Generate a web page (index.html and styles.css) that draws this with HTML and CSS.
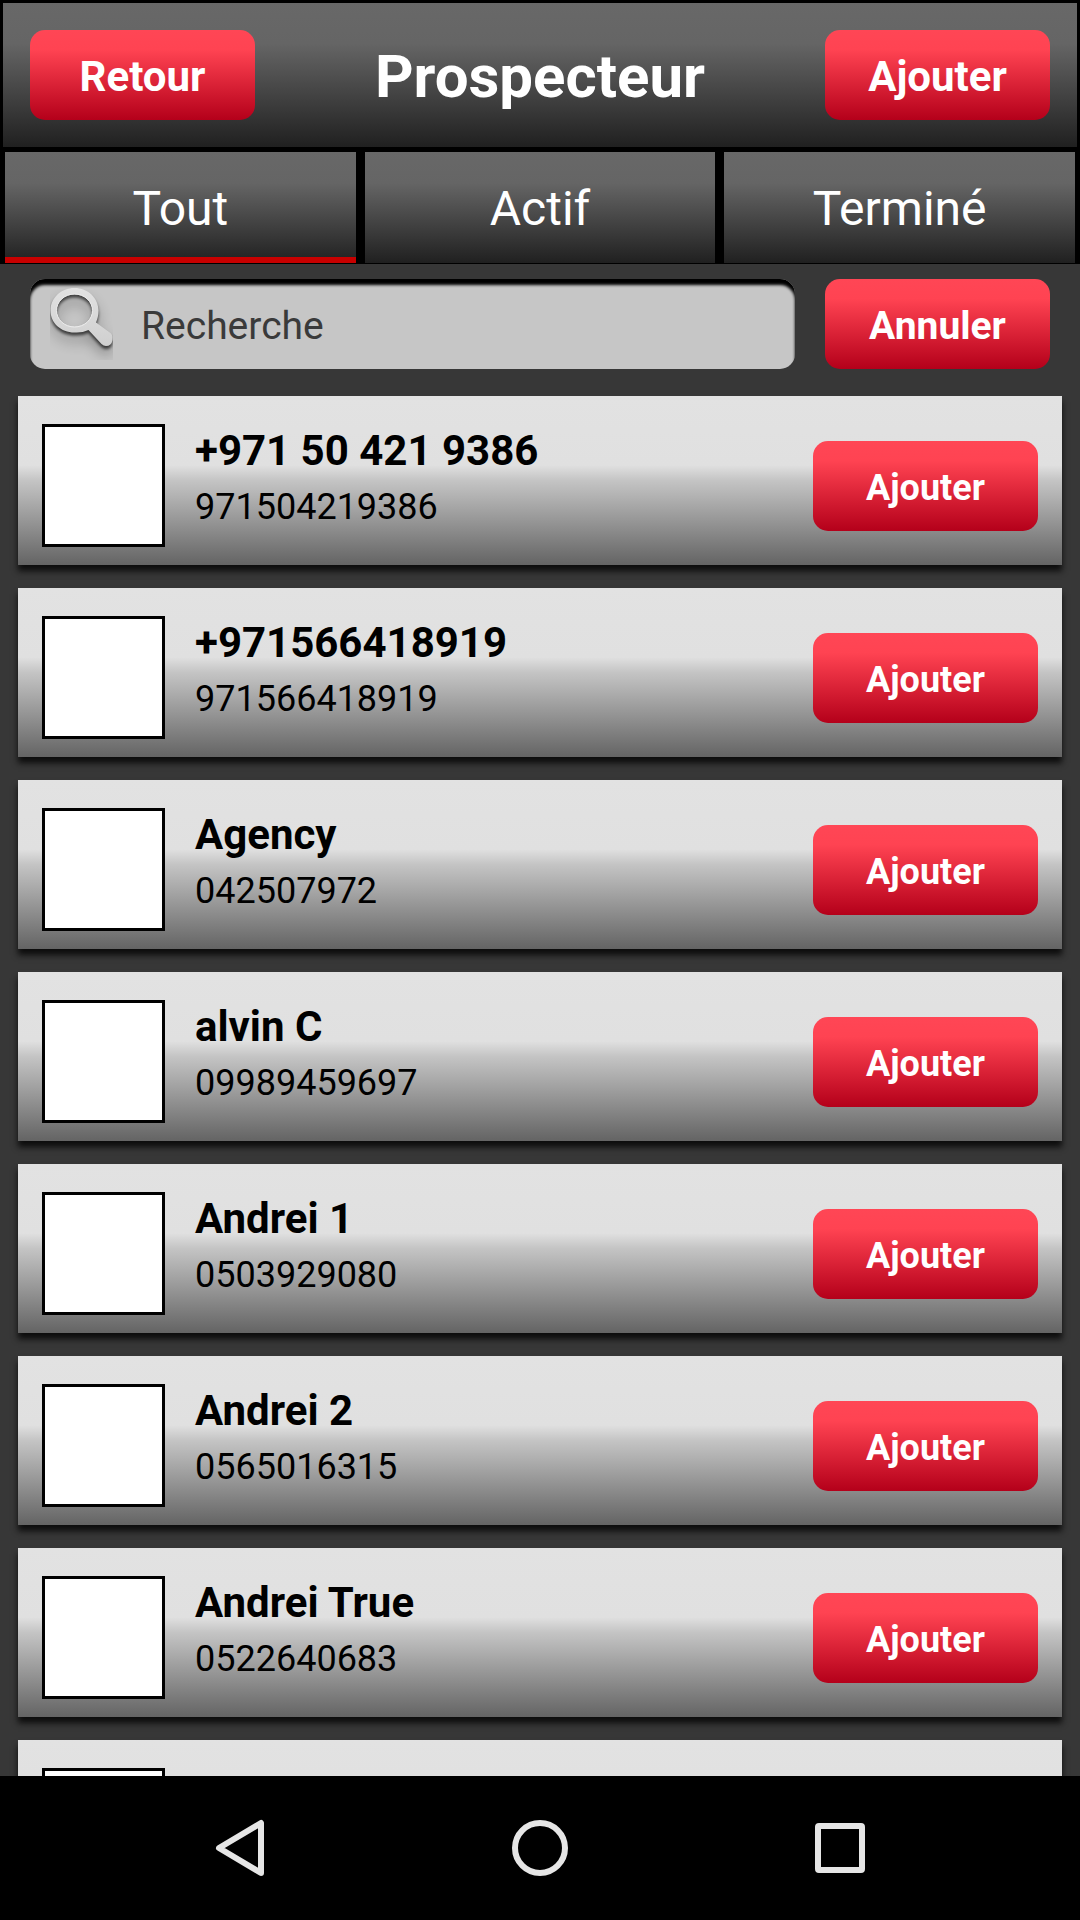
FILE: index.html
```html
<!DOCTYPE html>
<html lang="fr">
<head>
<meta charset="utf-8">
<meta name="viewport" content="width=device-width">
<title>Prospecteur</title>
<link rel="stylesheet" href="styles.css">
</head>
<body>
<div class="app">
  <header class="header">
    <button class="btn btn-large" type="button">Retour</button>
    <h1 class="title">Prospecteur</h1>
    <button class="btn btn-large" type="button">Ajouter</button>
  </header>

  <nav class="tabs">
    <button class="tab tab-active" type="button">Tout</button>
    <button class="tab" type="button">Actif</button>
    <button class="tab" type="button">Terminé</button>
  </nav>

  <form class="search">
    <div class="search-box">
      <label class="search-label" for="q" aria-label="Recherche">
        <svg class="search-icon" viewBox="0 0 63 74" aria-hidden="true">
          <defs>
            <linearGradient id="metal" x1="0" y1="0" x2="0" y2="1">
              <stop offset="0" stop-color="#e2e2e2"/>
              <stop offset="1" stop-color="#cfcfcf"/>
            </linearGradient>
            <filter id="soft" x="-50%" y="-50%" width="200%" height="200%">
              <feGaussianBlur stdDeviation="1.5"/>
            </filter>
            <filter id="haze" x="-50%" y="-50%" width="200%" height="200%">
              <feGaussianBlur stdDeviation="7"/>
            </filter>
            <path id="glass" fill-rule="evenodd" d="M24.500 2C38 2 48.500 12 48.500 24.500C48.500 29 47.500 33 46 36.500L60.500 47Q63 49 62.500 54Q61.500 60 56 60Q53.500 60 51.500 58L38.500 44Q32 47 24.500 46.500C11 46.500 .5 37 .5 24.500C.5 12 11 2 24.500 2ZM24.500 8.500C14.500 8.500 6.700 15.500 6.700 24.500C6.700 33.500 14.500 40.500 24.500 40.500C34.500 40.500 42.300 33.500 42.300 24.500C42.300 15.500 34.500 8.500 24.500 8.500Z"/>
          </defs>
          <use href="#glass" y="9" fill="#000" opacity=".3" filter="url(#haze)"/>
          <use href="#glass" y="3" fill="#000" opacity=".65" filter="url(#soft)"/>
          <use href="#glass" fill="url(#metal)"/>
          <ellipse cx="24.500" cy="24.500" rx="18" ry="16.500" fill="none" stroke="#ececec"/>
        </svg>
      </label>
      <input class="search-input" id="q" type="text" placeholder="Recherche">
    </div>
    <button class="btn btn-medium" type="button">Annuler</button>
  </form>

  <ul class="list">
    <li class="row">
      <span class="photo"></span>
      <div class="contact"><div class="name">+971 50 421 9386</div><div class="number">971504219386</div></div>
      <button class="btn" type="button">Ajouter</button>
    </li>
    <li class="row">
      <span class="photo"></span>
      <div class="contact"><div class="name">+971566418919</div><div class="number">971566418919</div></div>
      <button class="btn" type="button">Ajouter</button>
    </li>
    <li class="row">
      <span class="photo"></span>
      <div class="contact"><div class="name">Agency</div><div class="number">042507972</div></div>
      <button class="btn" type="button">Ajouter</button>
    </li>
    <li class="row">
      <span class="photo"></span>
      <div class="contact"><div class="name">alvin C</div><div class="number">09989459697</div></div>
      <button class="btn" type="button">Ajouter</button>
    </li>
    <li class="row">
      <span class="photo"></span>
      <div class="contact"><div class="name">Andrei 1</div><div class="number">0503929080</div></div>
      <button class="btn" type="button">Ajouter</button>
    </li>
    <li class="row">
      <span class="photo"></span>
      <div class="contact"><div class="name">Andrei 2</div><div class="number">0565016315</div></div>
      <button class="btn" type="button">Ajouter</button>
    </li>
    <li class="row">
      <span class="photo"></span>
      <div class="contact"><div class="name">Andrei True</div><div class="number">0522640683</div></div>
      <button class="btn" type="button">Ajouter</button>
    </li>
    <li class="row">
      <span class="photo"></span>
    </li>
  </ul>

  <nav class="system">
    <button class="key" type="button" aria-label="Retour">
      <svg class="key-icon" viewBox="0 0 60 60"><path d="M51 5V55L9 30Z"/></svg>
    </button>
    <button class="key" type="button" aria-label="Accueil">
      <svg class="key-icon" viewBox="0 0 60 60"><circle cx="30" cy="30" r="25"/></svg>
    </button>
    <button class="key" type="button" aria-label="Applications récentes">
      <svg class="key-icon" viewBox="0 0 60 60"><rect x="8" y="8" width="44" height="44" rx="1"/></svg>
    </button>
  </nav>
</div>
</body>
</html>
```
FILE: styles.css
```css
* {
  box-sizing: border-box;
}

body {
  margin: 0;
  background: #000;
  font-family: Roboto, "Liberation Sans", sans-serif;
}

button,
input {
  font-family: inherit;
}

.app {
  display: flex;
  flex-direction: column;
  height: 100vh;
  background: #373737;
}

.btn {
  flex: none;
  width: 225px;
  height: 90px;
  padding: 4px 0 0;
  border: 0;
  border-radius: 15px;
  background: linear-gradient(#ff4655, #ff4352 22%, #b4001a);
  color: #fff;
  font-size: 36px;
  font-weight: 700;
}

.btn-medium {
  font-size: 39px;
}

.btn-large {
  padding-top: 2px;
  font-size: 42px;
}

.header {
  flex: none;
  display: flex;
  align-items: center;
  justify-content: space-between;
  padding: 27px;
  border: solid #000;
  border-width: 3px 3px 4px;
  background: linear-gradient(#686868, #656565 28%, #202020);
}

.title {
  margin: 0;
  padding-top: 4px;
  color: #fff;
  font-size: 60px;
  line-height: 86px;
}

.tabs {
  flex: none;
  display: grid;
  grid-template-columns: repeat(3, 1fr);
  gap: 9px;
  padding: 1px 5px;
  background: #000;
}

.tab {
  height: 111px;
  padding: 2px 0 0;
  border: 0;
  background: linear-gradient(#686868, #656565 28%, #202020);
  color: #fff;
  font-size: 48px;
}

.tab-active {
  box-shadow: inset 0 -6px #c80000;
}

.search {
  flex: none;
  display: flex;
  gap: 30px;
  padding: 15px 30px 27px;
}

.search-box {
  flex: 1;
  display: flex;
  align-items: flex-start;
  height: 90px;
  padding: 7px 20px 0;
  border-radius: 15px;
  background: #c6c6c6;
  box-shadow: inset 0 6px 3px #000;
}

.search-icon {
  display: block;
  width: 63px;
  height: 74px;
}

.search-input {
  flex: 1;
  min-width: 0;
  height: 80px;
  padding: 0 0 0 28px;
  border: 0;
  outline: 0;
  background: none;
  color: #3a3a3a;
  font-size: 39px;
}

.search-input::placeholder {
  color: #3a3a3a;
  opacity: 1;
}

.list {
  flex: 1;
  min-height: 0;
  display: flex;
  flex-direction: column;
  gap: 23px;
  margin: 0;
  padding: 0 18px;
  overflow: hidden;
  list-style: none;
}

.row {
  flex: none;
  display: flex;
  align-items: center;
  padding: 28px 24px 18px;
  background: linear-gradient(#e2e2e2, #e0e0e0 41%, #c4c4c4 50%, #646464);
  box-shadow: 0 6px 6px #0d0d0d;
}

.photo {
  flex: none;
  width: 123px;
  height: 123px;
  border: 3px solid #000;
  background: #fff;
}

.contact {
  flex: 1;
  align-self: flex-start;
  padding-left: 30px;
  color: #000;
}

.name {
  font-size: 42px;
  font-weight: 700;
  line-height: 54px;
}

.number {
  font-size: 36px;
  line-height: 58px;
}

.system {
  flex: none;
  display: grid;
  grid-template-columns: repeat(3, 1fr);
  padding: 0 90px;
  background: #000;
}

.key {
  display: flex;
  align-items: center;
  justify-content: center;
  height: 144px;
  padding: 0;
  border: 0;
  background: none;
}

.key-icon {
  width: 60px;
  height: 60px;
  fill: none;
  stroke: #e6e6e6;
  stroke-width: 6px;
  stroke-linejoin: round;
}
```
